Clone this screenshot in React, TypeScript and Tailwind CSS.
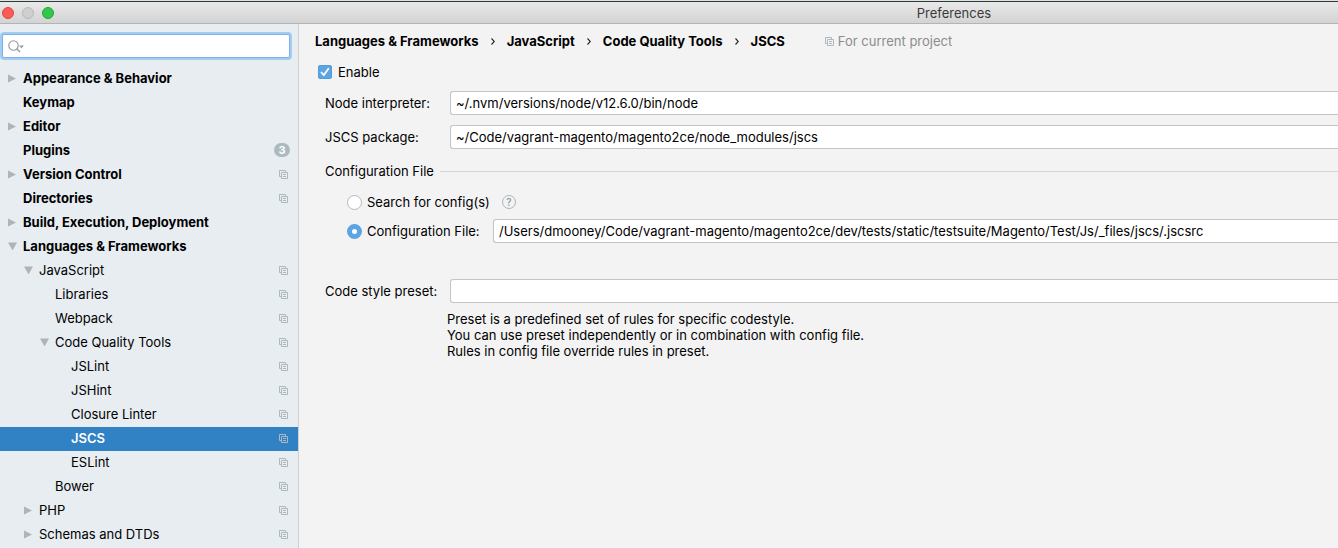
import { useState } from "react";

type Item = {
  label: string;
  level: 0 | 1 | 2 | 3;
  arrow?: "right" | "down";
  badge?: string;
  project?: boolean;
};

const items: Item[] = [
  { label: "Appearance & Behavior", level: 0, arrow: "right" },
  { label: "Keymap", level: 0 },
  { label: "Editor", level: 0, arrow: "right" },
  { label: "Plugins", level: 0, badge: "3" },
  { label: "Version Control", level: 0, arrow: "right", project: true },
  { label: "Directories", level: 0, project: true },
  { label: "Build, Execution, Deployment", level: 0, arrow: "right" },
  { label: "Languages & Frameworks", level: 0, arrow: "down" },
  { label: "JavaScript", level: 1, arrow: "down", project: true },
  { label: "Libraries", level: 2, project: true },
  { label: "Webpack", level: 2, project: true },
  { label: "Code Quality Tools", level: 2, arrow: "down", project: true },
  { label: "JSLint", level: 3, project: true },
  { label: "JSHint", level: 3, project: true },
  { label: "Closure Linter", level: 3, project: true },
  { label: "JSCS", level: 3, project: true },
  { label: "ESLint", level: 3, project: true },
  { label: "Bower", level: 2, project: true },
  { label: "PHP", level: 1, arrow: "right", project: true },
  { label: "Schemas and DTDs", level: 1, arrow: "right", project: true },
];

const indent = ["pl-2", "pl-6", "pl-10", "pl-14"];
const crumbs = ["Languages & Frameworks", "JavaScript", "Code Quality Tools", "JSCS"];
const field =
  "h-6 min-w-0 flex-1 rounded-l-[3px] border border-r-0 border-[#c4c4c4] bg-white px-[5px] text-[13px] outline-none";

function ProjectIcon() {
  return (
    <svg width="9" height="9" viewBox="0 0 9 9" fill="none" stroke="#adb8bf" className="shrink-0" aria-hidden="true">
      <path d="M2.5 6.5H.5V.5H6.5V2.5" />
      <path d="M2.5 2.5H8.5V8.5H2.5Z" />
      <path d="M4 4.5H7M4 6.5H7" />
    </svg>
  );
}

function Arrow({ dir }: { dir?: "right" | "down" }) {
  return (
    <svg width="9" height="9" viewBox="0 0 9 9" fill="#b3b3b3" className="shrink-0" aria-hidden="true">
      {dir === "right" && <path d="M0 .5V8.5L8 4.5Z" />}
      {dir === "down" && <path d="M0 .5H9L4.5 8.5Z" />}
    </svg>
  );
}

function Sidebar() {
  const [selected, setSelected] = useState("JSCS");
  return (
    <aside className="w-[299px] shrink-0 overflow-hidden border-r border-[#d0d0d0] bg-[#e7edf1]">
      <div className="pt-2.5 pr-2 pb-[9px] pl-0.5">
        <div className="flex h-6 items-center rounded-[2px] border border-[#7eb1e6] bg-white pl-[5px] ring-2 ring-[#a3ccf5]">
          <svg width="17" height="13" viewBox="0 0 17 13" fill="none" stroke="#8f9ba3" className="shrink-0" aria-hidden="true">
            <circle cx="5.5" cy="5.5" r="4.7" strokeWidth="1.1" />
            <path d="M8.8 8.8L12 12" strokeWidth="1.4" />
            <path d="M11 5.5H16L13.5 8.2Z" fill="#8f9ba3" stroke="none" />
          </svg>
          <input type="search" aria-label="Search settings" className="min-w-0 flex-1 bg-transparent px-1 outline-none" />
        </div>
      </div>
      <ul>
        {items.map((it) => {
          const active = it.label === selected;
          return (
            <li key={it.label}>
              <button
                type="button"
                onClick={() => setSelected(it.label)}
                className={`flex h-6 w-full items-center pr-2.5 pb-0.5 text-left ${indent[it.level]} ${
                  active ? "bg-[#3181c5] font-semibold text-white" : it.level === 0 ? "font-bold" : ""
                }`}
              >
                <Arrow dir={it.arrow} />
                <span className="flex-1 pl-1.5">{it.label}</span>
                {it.badge && (
                  <span className="-mr-0.5 flex h-3.5 w-4 items-center justify-center rounded-full bg-[#adb9c1] text-[11px] font-bold text-white">
                    {it.badge}
                  </span>
                )}
                {it.project && <ProjectIcon />}
              </button>
            </li>
          );
        })}
      </ul>
    </aside>
  );
}

function Radio({ id, label, checked, onChange }: { id: string; label: string; checked: boolean; onChange: () => void }) {
  return (
    <label htmlFor={id} className="flex shrink-0 items-center gap-[5px]">
      <input
        id={id}
        type="radio"
        name="config"
        checked={checked}
        onChange={onChange}
        className="size-[15px] appearance-none rounded-full border border-[#b8b8b8] bg-white checked:border-5 checked:border-[#5ba5e3]"
      />
      {label}
    </label>
  );
}

export default function App() {
  const [enabled, setEnabled] = useState(true);
  const [mode, setMode] = useState("file");
  return (
    <div className="flex h-screen flex-col overflow-hidden bg-[#f3f3f3] font-[Inter,'Liberation_Sans',sans-serif] text-[13px] leading-4 text-black">
      <div className="h-px shrink-0 bg-[#dfe5e5]" />
      <header className="flex h-[23px] shrink-0 items-center border-t border-b border-t-[#30393b] border-b-[#b4b4b4] bg-linear-to-b from-[#e9e9e9] to-[#d3d3d3]">
        <div className="flex gap-2 pl-0.5">
          <button type="button" aria-label="Close" className="size-3 rounded-full border border-[#e2463f] bg-[#fc5b57]" />
          <button type="button" aria-label="Minimize" className="size-3 rounded-full border border-[#b9b9b9] bg-[#cfcfcf]" />
          <button type="button" aria-label="Zoom" className="size-3 rounded-full border border-[#1fa833] bg-[#33c748]" />
        </div>
        <h1 className="flex-1 pl-[516px] text-center text-[#3a3a3a]">Preferences</h1>
      </header>
      <div className="flex min-h-0 flex-1">
        <Sidebar />
        <main className="min-w-0 flex-1 pt-[9px] pl-4">
          <div className="flex items-center">
            <nav aria-label="Breadcrumb" className="flex font-bold">
              {crumbs.map((c, i) => (
                <span key={c} className="flex items-center">
                  {i > 0 && (
                    <svg width="4" height="7" viewBox="0 0 4 7" fill="none" stroke="#222" strokeWidth="1.1" className="mx-3" aria-hidden="true">
                      <path d="M.5 .5L3.3 3.5L.5 6.5" />
                    </svg>
                  )}
                  <a href="#">{c}</a>
                </span>
              ))}
            </nav>
            <span className="flex items-center gap-1 pl-10 text-[#8c8c8c]">
              <ProjectIcon />
              For current project
            </span>
          </div>

          <label className="mt-[15px] flex items-center gap-1.5 pl-[3px]">
            <span className="grid size-3.5 place-items-center">
              <input
                type="checkbox"
                checked={enabled}
                onChange={(e) => setEnabled(e.target.checked)}
                className="col-start-1 row-start-1 size-3.5 appearance-none rounded-[2px] border border-[#b8b8b8] bg-white checked:border-[#539bd9] checked:bg-[#5ba5e3]"
              />
              {enabled && (
                <svg width="10" height="10" viewBox="0 0 10 10" fill="none" stroke="white" strokeWidth="1.8" className="pointer-events-none col-start-1 row-start-1" aria-hidden="true">
                  <path d="M1 5L3.8 8L8.8 1.2" />
                </svg>
              )}
            </span>
            Enable
          </label>

          <div className="mt-[11px] flex items-center pl-2.5">
            <label htmlFor="node" className="w-[125px] shrink-0">Node interpreter:</label>
            <input id="node" className={field} defaultValue="~/.nvm/versions/node/v12.6.0/bin/node" />
          </div>
          <div className="mt-2.5 flex items-center pl-2.5">
            <label htmlFor="package" className="w-[125px] shrink-0">JSCS package:</label>
            <input id="package" className={field} defaultValue="~/Code/vagrant-magento/magento2ce/node_modules/jscs" />
          </div>

          <fieldset className="mt-3.5 pl-2.5">
            <legend className="flex w-full items-center gap-1.5">
              Configuration File
              <span className="h-px flex-1 bg-[#d3d3d3]" />
            </legend>
            <div className="mt-[15px] flex items-center gap-3 pl-[22px]">
              <Radio id="search" label="Search for config(s)" checked={mode === "search"} onChange={() => setMode("search")} />
              <button type="button" aria-label="Help" className="flex size-3.5 items-center justify-center rounded-full border border-[#adb5ba] text-[10px] font-medium text-[#8f999f]">
                ?
              </button>
            </div>
            <div className="mt-[9px] flex items-center gap-3 pl-[22px]">
              <div className="w-[134px] shrink-0">
                <Radio id="file" label="Configuration File:" checked={mode === "file"} onChange={() => setMode("file")} />
              </div>
              <input
                aria-label="Configuration file path"
                className={field}
                defaultValue="/Users/dmooney/Code/vagrant-magento/magento2ce/dev/tests/static/testsuite/Magento/Test/Js/_files/jscs/.jscsrc"
              />
            </div>
          </fieldset>

          <div className="mt-9 flex items-center pl-2.5">
            <label htmlFor="preset" className="w-[125px] shrink-0">Code style preset:</label>
            <input id="preset" className={field} />
          </div>
          <p className="mt-2 pl-[132px]">
            Preset is a predefined set of rules for specific codestyle.
            <br />
            You can use preset independently or in combination with config file.
            <br />
            Rules in config file override rules in preset.
          </p>
        </main>
      </div>
    </div>
  );
}
